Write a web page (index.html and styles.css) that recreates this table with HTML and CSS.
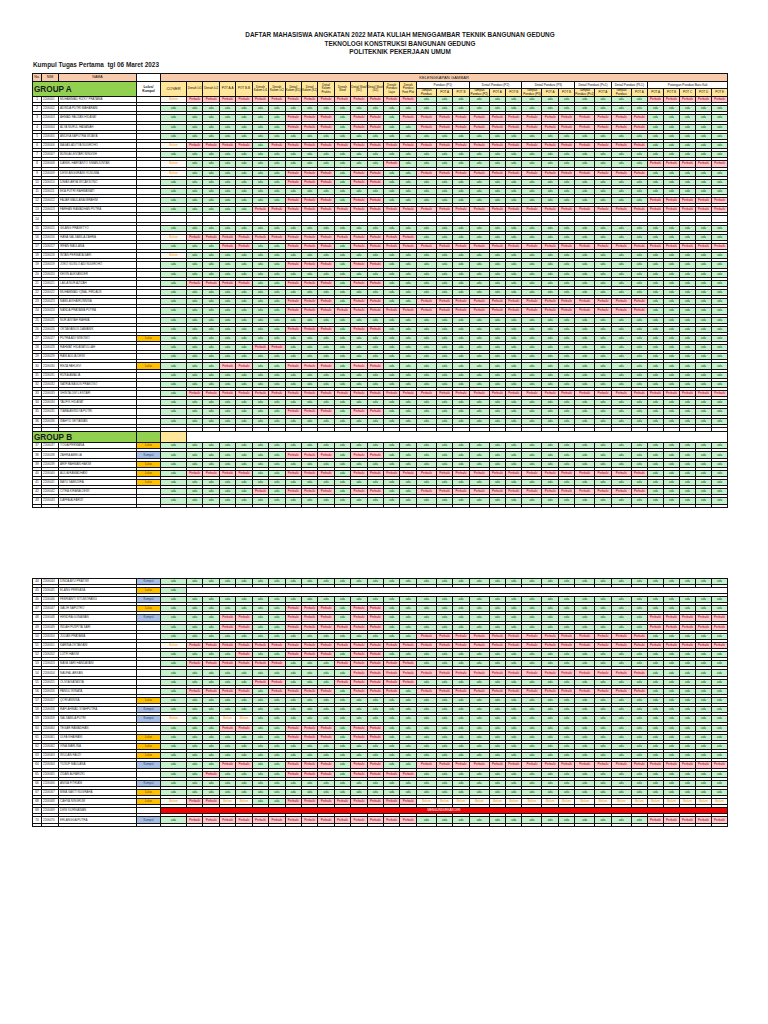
FILE: index.html
```html
<!DOCTYPE html>
<html lang="id">
<head>
<meta charset="utf-8">
<title>Daftar Mahasiswa Angkatan 2022</title>
<link rel="stylesheet" href="styles.css">
</head>
<body>
<div class="page">
  <div class="title">
    <div>DAFTAR MAHASISWA ANGKATAN 2022 MATA KULIAH MENGGAMBAR TEKNIK BANGUNAN GEDUNG</div>
    <div>TEKNOLOGI KONSTRUKSI BANGUNAN GEDUNG</div>
    <div>POLITEKNIK PEKERJAAN UMUM</div>
  </div>
  <div class="subtitle">Kumpul Tugas Pertama&nbsp; tgl 06 Maret 2023</div>

  <table class="sheet" id="sheet1">
    <colgroup>
      <col class="cn"><col class="ci"><col class="cm"><col class="cl"><col class="cc">
      <col class="cd"><col class="cd"><col class="cd"><col class="cd"><col class="cd"><col class="cd"><col class="cd">
      <col class="cd"><col class="cd"><col class="cd"><col class="cd"><col class="cd"><col class="cd"><col class="cd">
      <col class="ct"><col class="cp"><col class="cp">
      <col class="ct"><col class="cp"><col class="cp">
      <col class="ct"><col class="cp"><col class="cp">
      <col class="ct"><col class="cp">
      <col class="ct"><col class="cp">
      <col class="cb"><col class="cb"><col class="cb"><col class="cb"><col class="cb">
    </colgroup>
    <thead>
      <tr class="h1">
        <th class="pc">No.</th><th class="pc">NIM</th><th class="pc">NAMA</th><th></th>
        <th class="pc kg" colspan="33">KELENGKAPAN GAMBAR</th>
      </tr>
      <tr class="h2">
        <th class="grp" colspan="3" rowspan="2">GROUP A</th>
        <th class="lk" rowspan="2">Lulus/<br>Kumpul</th>
        <th class="yh cv" rowspan="2">COVER</th>
        <th class="yh" rowspan="2">Denah Lt1</th>
        <th class="yh" rowspan="2">Denah Lt2</th>
        <th class="yh" rowspan="2">POT A-A</th>
        <th class="yh" rowspan="2">POT B-B</th>
        <th class="yh" rowspan="2">Denah Kolom Lt1</th>
        <th class="yh" rowspan="2">Denah Kolom Lt2</th>
        <th class="yh" rowspan="2">Detail Kolom (K1)</th>
        <th class="yh" rowspan="2">Detail Kolom (K2)</th>
        <th class="yh" rowspan="2">Detail Kolom Praktis</th>
        <th class="yh" rowspan="2">Denah Sloof</th>
        <th class="yh" rowspan="2">Detail Sloof (S1)</th>
        <th class="yh" rowspan="2">Detail Sloof (S2)</th>
        <th class="yh" rowspan="2">Denah Pondasi Lajur</th>
        <th class="yh" rowspan="2">Denah Pondasi Foot Plat</th>
        <th class="gt" colspan="3">Pondasi (P1)</th>
        <th class="gt" colspan="3">Detail Pondasi (P2)</th>
        <th class="gt" colspan="3">Detail Pondasi (P3)</th>
        <th class="gt" colspan="2">Detail Pondasi (Ps1)</th>
        <th class="gt" colspan="2">Detail Pondasi (PL1)</th>
        <th class="gt" colspan="5">Potongan Pondasi Batu Kali</th>
      </tr>
      <tr class="h3">
        <th class="yh">Tampak Pondasi</th><th class="yh">POT A</th><th class="yh">POT B</th>
        <th class="yh">Tampak Pondasi (P2)</th><th class="yh">POT A</th><th class="yh">POT B</th>
        <th class="yh">Tampak Pondasi (P3)</th><th class="yh">POT A</th><th class="yh">POT B</th>
        <th class="yh">Tampak Pondasi (Ps1)</th><th class="yh">POT A</th>
        <th class="yh">Tampak Pondasi</th><th class="yh">POT A</th>
        <th class="yh">POT A</th><th class="yh">POT B</th><th class="yh">POT C</th><th class="yh">POT D</th><th class="yh">POT E</th>
      </tr>
    </thead>
    <tbody id="groupA"></tbody>
    <tbody id="groupB">
      <tr class="gap" id="gapRow"></tr>
      <tr class="gh">
        <th class="grp" colspan="3">GROUP B</th>
        <td class="lg"></td>
        <td class="yl"></td>
        <td colspan="32"></td>
      </tr>
    </tbody>
  </table>

  <table class="sheet sheet2" id="sheet2">
    <colgroup>
      <col class="cn"><col class="ci"><col class="cm"><col class="cl"><col class="cc">
      <col class="cd"><col class="cd"><col class="cd"><col class="cd"><col class="cd"><col class="cd"><col class="cd">
      <col class="cd"><col class="cd"><col class="cd"><col class="cd"><col class="cd"><col class="cd"><col class="cd">
      <col class="ct"><col class="cp"><col class="cp">
      <col class="ct"><col class="cp"><col class="cp">
      <col class="ct"><col class="cp"><col class="cp">
      <col class="ct"><col class="cp">
      <col class="ct"><col class="cp">
      <col class="cb"><col class="cb"><col class="cb"><col class="cb"><col class="cb">
    </colgroup>
    <tbody id="groupC"></tbody>
  </table>
</div>
<script src="script.js"></script>
</body>
</html>
```

FILE: styles.css
```css
* { box-sizing: border-box; }
html, body { margin: 0; background: #ffffff; }
body { font-family: "Liberation Sans", Arial, sans-serif; color: #111111; }

.page { padding: 31px 0 0 32px; }

.title {
  width: 736px;
  text-align: center;
  font-weight: bold;
  font-size: 6.4px;
  line-height: 8.5px;
  color: #1a1a1a;
}
.subtitle {
  margin: 4px 0 0 1px;
  font-weight: bold;
  font-size: 6.4px;
  line-height: 8px;
  color: #1a1a1a;
}

.sheet {
  margin-top: 4.5px;
  border-collapse: collapse;
  table-layout: fixed;
  width: 695.2px;
}
.sheet2 { margin-top: 70px; }

.sheet th,
.sheet td {
  border: 1px solid #111111;
  padding: 0;
  font-size: 3px;
  line-height: 3px;
  font-weight: normal;
  text-align: center;
  vertical-align: middle;
  white-space: nowrap;
  overflow: hidden;
}

col.cn { width: 9px; }
col.ci { width: 17px; }
col.cm { width: 78px; }
col.cl { width: 24px; }
col.cc { width: 26px; }
col.cd { width: 16.43px; }
col.ct { width: 20px; }
col.cp { width: 16.4px; }
col.cb { width: 16px; }

.sheet .h1 { height: 8px; }
.sheet .h2 { height: 7px; }
.sheet .h3 { height: 8px; }

.sheet .pc { background: #f8cbad; font-size: 3.6px; }
.sheet .kg { font-size: 4px; letter-spacing: 0.1px; }
.sheet .grp {
  background: #92d050;
  font-size: 8.2px;
  line-height: 9px;
  font-weight: bold;
  text-align: left;
  padding-left: 1px;
  color: #1a1a1a;
}
.sheet .lk {
  font-size: 3.4px;
  line-height: 4px;
  font-weight: bold;
  white-space: normal;
}
.sheet .yh {
  background: #ffe699;
  font-size: 3px;
  line-height: 3.4px;
  white-space: normal;
}
.sheet .cv { font-size: 4px; }
.sheet .gt { background: #ffffff; font-size: 3.2px; }

.sheet tr.r { height: 6.2px; }
.sheet tr.s { height: 3px; }
.sheet tr.gap { height: 4.5px; }
.sheet tr.gh { height: 11px; }

.sheet .nim,
.sheet .nm { text-align: left; padding-left: 1px; color: #333333; }

.sheet .a { background: #c6efce; color: #006100; }
.sheet .p { background: #ffc7ce; color: #9c0006; }
.sheet .b { background: #fbf7f1; color: #f39c12; }
.sheet .lo { background: #ffc000; color: #5a4500; }
.sheet .lb { background: #a9bfe6; color: #2e3f66; }
.sheet .red { background: #ee0000; color: #ffffff; }
.sheet .lg { background: #92d050; }
.sheet .yl { background: #ffe699; }
```

FILE: script.js
```js
(function () {
  var LABEL = { A: 'ada', P: 'Perbaiki', B: 'Belum', _: '' };
  var CLS = { A: 'a', P: 'p', B: 'b', _: '' };

  function rep(c, n) { return new Array(n + 1).join(c); }

  var ALL = rep('A', 33);
  var M1 = 'AAAAAAAPPPAPP' + rep('A', 20);
  var M2 = 'AAAPPAAPPPAPP' + rep('A', 20);
  var M3 = 'AAAAAAAPPPAPPAA' + rep('P', 13) + rep('A', 5);

  var names = [
    'MUHAMMAD RIZKY PRATAMA', 'ADINDA PUTRI MAHARANI', 'AHMAD FAUZAN HIDAYAT', 'ALYA NURUL HASANAH',
    'ANDIKA SAPUTRA WIJAYA', 'BAGAS ADITYA NUGROHO', 'BUNGA LESTARI NINGSIH', 'DANIEL HARYANTO SIMANJUNTAK',
    'DEWI ANGGRAINI KUSUMA', 'DIMAS ARYA WICAKSONO', 'EKA PUTRI RAHMAWATI', 'FAJAR MAULANA IBRAHIM',
    'FARHAN RAMADHAN PUTRA', 'GILANG PRASETYO', 'HANA SALSABILA ZAHRA', 'IRFAN MAULANA',
    'INTAN PERMATA SARI', 'JOKO SUSILO ADI NUGROHO', 'KEVIN ALEXANDER', 'LAILA NUR AZIZAH',
    'MUHAMMAD IQBAL FIRDAUS', 'NABILA KHAIRUNNISA', 'NANDA PRATAMA PUTRA', 'NUR AISYAH RAHMA',
    'OKTAVIANUS DAMANIK', 'PUTRA ADI WIBOWO', 'RAHMAT HIDAYATULLAH', 'RANI AULIA DEWI',
    'REZA FAHLEVI', 'RIZKA AMALIA', 'SATRIA BAGUS PRAKOSO', 'SHINTA DWI LESTARI',
    'TAUFIK HIDAYAT', 'TIARA ANINDYA PUTRI', 'WAHYU SETIAWAN', 'YOGA PERMANA',
    'ZAHRA AMELIA', 'ARIF RAHMAN HAKIM', 'AULIA RAMADHANI', 'BAYU SAMUDRA',
    'CITRA KIRANA DEWI', 'DAFFA ALFARIZI', 'DINDA AYU PRATIWI', 'ELANG PERKASA',
    'FEBRIANTI SITUMORANG', 'GALIH SAPUTRO', 'HENDRA GUNAWAN', 'INDAH PUSPITA SARI',
    'JULIAN PRATAMA', 'KARINA OKTAVIANI', 'LUTFI HAKIM', 'MAYA SARI HANDAYANI',
    'NAUFAL ARKAN', 'OLIVIA NATASYA', 'PANDU WINATA', 'QORI ANNISA',
    'RAFI AHMAD SYAHPUTRA', 'SALSABILA PUTRI', 'TEGAR RAMADHAN', 'ULFA KHAIRANI',
    'VINA MARLINA', 'WILDAN FAUZI', 'YUSUF MAULANA', 'ZIDAN ALFARIZKI',
    'ANISA FITRIANI', 'BIMA SAKTI NUGRAHA', 'CAHYA NINGRUM', 'DENI KURNIAWAN',
    'ERLANGGA PUTRA', 'FIKRI HAIKAL', 'GEBY ANASTASIA', 'HARIS MUNANDAR'
  ];
  var nameIdx = 0;

  function cell(tr, cls, text, span) {
    var td = document.createElement('td');
    if (cls) td.className = cls;
    if (text) td.textContent = text;
    if (span) td.colSpan = span;
    tr.appendChild(td);
    return td;
  }

  function pad(n) { return (n < 10 ? '00' : n < 100 ? '0' : '') + n; }

  function student(tb, no, row) {
    var p = row[0];
    var l = row[1] || '';
    var blank = p === 'blank';
    var tr = document.createElement('tr');
    tr.className = 'r';
    cell(tr, 'no', String(no));
    cell(tr, 'nim', blank ? '' : '2206' + pad(no));
    cell(tr, 'nm', blank ? '' : names[nameIdx++ % names.length]);
    cell(tr, l ? 'l' + l : '', l === 'o' ? 'Lulus' : (l === 'b' ? 'Kumpul' : ''));
    var i;
    if (p === 'red') {
      cell(tr, 'red', 'MENGUNDURKAN DIRI', 33);
    } else if (p === 'merge') {
      cell(tr, 'a', 'ada');
      cell(tr, '', '', 32);
    } else {
      for (i = 0; i < 33; i++) {
        var c = blank ? '_' : (p.charAt(i) || 'A');
        cell(tr, CLS[c], LABEL[c]);
      }
    }
    tb.appendChild(tr);

    var sp = document.createElement('tr');
    sp.className = 's';
    for (i = 0; i < 5; i++) cell(sp, '', '');
    if (p === 'merge') {
      cell(sp, '', '', 32);
    } else {
      for (i = 0; i < 32; i++) cell(sp, '', '');
    }
    tb.appendChild(sp);
  }

  var groupA = [
    ['B' + rep('P', 14) + rep('A', 13) + rep('P', 5)],
    [ALL],
    ['AAAAAAAPPPAPPA' + rep('P', 14) + rep('A', 5)],
    [M3],
    [ALL],
    ['BPPPPA' + rep('P', 22) + rep('A', 5)],
    [ALL],
    ['B' + rep('A', 12) + 'P' + rep('A', 14) + rep('P', 5)],
    ['BAAAAAAPPPAPPAA' + rep('P', 13) + rep('A', 5)],
    [M1],
    [ALL],
    ['AAAAAAAPPPAPP' + rep('A', 15) + rep('P', 5)],
    ['AAAAA' + rep('P', 28)],
    ['blank'],
    [ALL],
    ['B' + rep('P', 14) + rep('A', 18)],
    ['AAAPPAAPPPA' + rep('P', 22)],
    ['B' + rep('A', 32)],
    [M1],
    [ALL],
    ['APPPPAAPPPAPPAA' + rep('A', 18)],
    [ALL],
    [M3],
    ['AAAAAAA' + rep('P', 21) + rep('A', 5)],
    [ALL],
    [M1],
    [ALL, 'o'],
    ['AAAAAPP' + rep('A', 26)],
    [ALL],
    [M2, 'o'],
    [ALL],
    [ALL],
    ['A' + rep('P', 32)],
    [ALL],
    [M1],
    [ALL]
  ];

  var groupB = [
    [ALL, 'o'],
    [M1, 'b'],
    [ALL, 'o'],
    ['APPPPAAPPPA' + rep('P', 17) + rep('A', 5), 'o'],
    [ALL, 'o'],
    ['AAAAAPAPPPAPPAA' + rep('P', 13) + rep('A', 5)],
    [ALL]
  ];

  var groupC = [
    [ALL, 'b'],
    ['merge', 'o'],
    [ALL, 'b'],
    [M1, 'o'],
    ['AAAPPAAPPPAPP' + rep('A', 15) + rep('P', 5), 'b'],
    ['AAAPPAAPPPPPP' + rep('A', 15) + rep('P', 5)],
    [rep('A', 15) + rep('P', 13) + rep('A', 5)],
    ['B' + rep('P', 32)],
    ['AAAAPAAPPPAPP' + rep('A', 20)],
    ['A' + rep('P', 6) + 'AAA' + rep('P', 5) + rep('A', 18)],
    [rep('A', 11) + rep('P', 17) + rep('A', 5)],
    ['AAAAAPPAAAPPPPP' + rep('A', 18)],
    ['APPPPAPPPPAPPPA' + rep('P', 13) + rep('A', 5)],
    [ALL, 'o'],
    [ALL, 'b'],
    ['BAABB' + rep('A', 28), 'b'],
    [M2],
    [M1, 'o'],
    [ALL, 'o'],
    [ALL, 'o'],
    ['AAAPPAAPPPAPPAA' + rep('P', 18), 'b'],
    ['AAPAAAAPPPAPPPP' + rep('A', 18)],
    [ALL, 'b'],
    [ALL, 'o'],
    ['BPPBBAA' + rep('P', 8) + rep('B', 18), 'o'],
    ['red'],
    ['A' + rep('P', 14) + rep('A', 13) + rep('P', 5), 'b']
  ];

  var no = 1;
  var tA = document.getElementById('groupA');
  groupA.forEach(function (r) { student(tA, no++, r); });

  var gap = document.getElementById('gapRow');
  for (var g = 0; g < 37; g++) cell(gap, '', '');

  var tB = document.getElementById('groupB');
  groupB.forEach(function (r) { student(tB, no++, r); });

  var tC = document.getElementById('groupC');
  groupC.forEach(function (r) { student(tC, no++, r); });
})();
```
